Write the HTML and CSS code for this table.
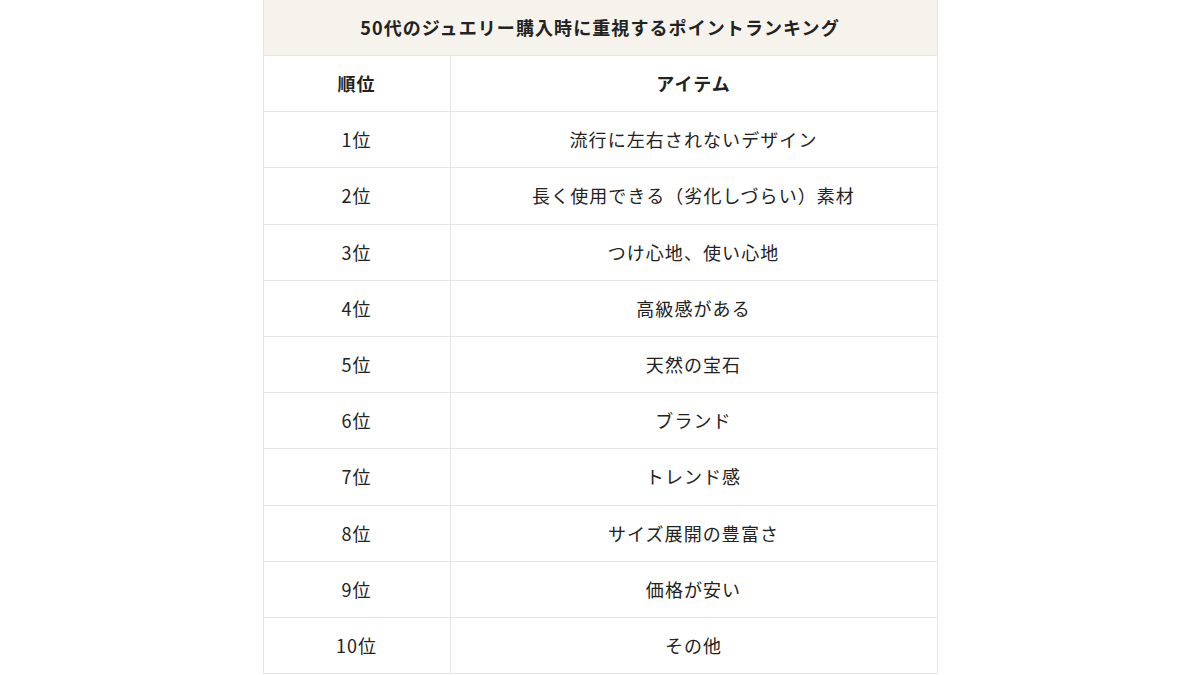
FILE: index.html
```html
<!DOCTYPE html>
<html lang="ja">
<head>
    <meta charset="UTF-8">
    <meta name="viewport" content="width=device-width, initial-scale=1.0">
    <title>50代のジュエリー購入時に重視するポイントランキング</title>
    <link rel="stylesheet" href="styles.css">
</head>
<body>
    <table class="ranking">
        <colgroup>
            <col class="col-rank">
            <col class="col-item">
        </colgroup>
        <thead>
            <tr>
                <th class="ranking-title" colspan="2">50代のジュエリー購入時に重視するポイントランキング</th>
            </tr>
            <tr>
                <th>順位</th>
                <th>アイテム</th>
            </tr>
        </thead>
        <tbody>
            <tr><td>1位</td><td>流行に左右されないデザイン</td></tr>
            <tr><td>2位</td><td>長く使用できる（劣化しづらい）素材</td></tr>
            <tr><td>3位</td><td>つけ心地、使い心地</td></tr>
            <tr><td>4位</td><td>高級感がある</td></tr>
            <tr><td>5位</td><td>天然の宝石</td></tr>
            <tr><td>6位</td><td>ブランド</td></tr>
            <tr><td>7位</td><td>トレンド感</td></tr>
            <tr><td>8位</td><td>サイズ展開の豊富さ</td></tr>
            <tr><td>9位</td><td>価格が安い</td></tr>
            <tr><td>10位</td><td>その他</td></tr>
        </tbody>
    </table>
</body>
</html>
```

FILE: styles.css
```css
/* Page */
body {
    margin: 0;
    background-color: #fff;
    color: #222;
    font-family: "Noto Sans CJK JP", "Noto Sans", sans-serif;
}

/* Ranking table */
.ranking {
    width: 675px;
    margin: -1px auto 0;
    border-collapse: collapse;
    table-layout: fixed;
    font-size: 18px;
    letter-spacing: 0.06em;
}

.ranking th,
.ranking td {
    height: 55.2px;
    padding: 0 10px;
    border: 1px solid #e6e6e6;
    text-align: center;
    vertical-align: middle;
    line-height: 1.5;
}

.ranking th {
    font-weight: bold;
}

.ranking .ranking-title {
    height: 55px;
    background-color: #f6f3ec;
}

.col-rank {
    width: 187px;
}
```
